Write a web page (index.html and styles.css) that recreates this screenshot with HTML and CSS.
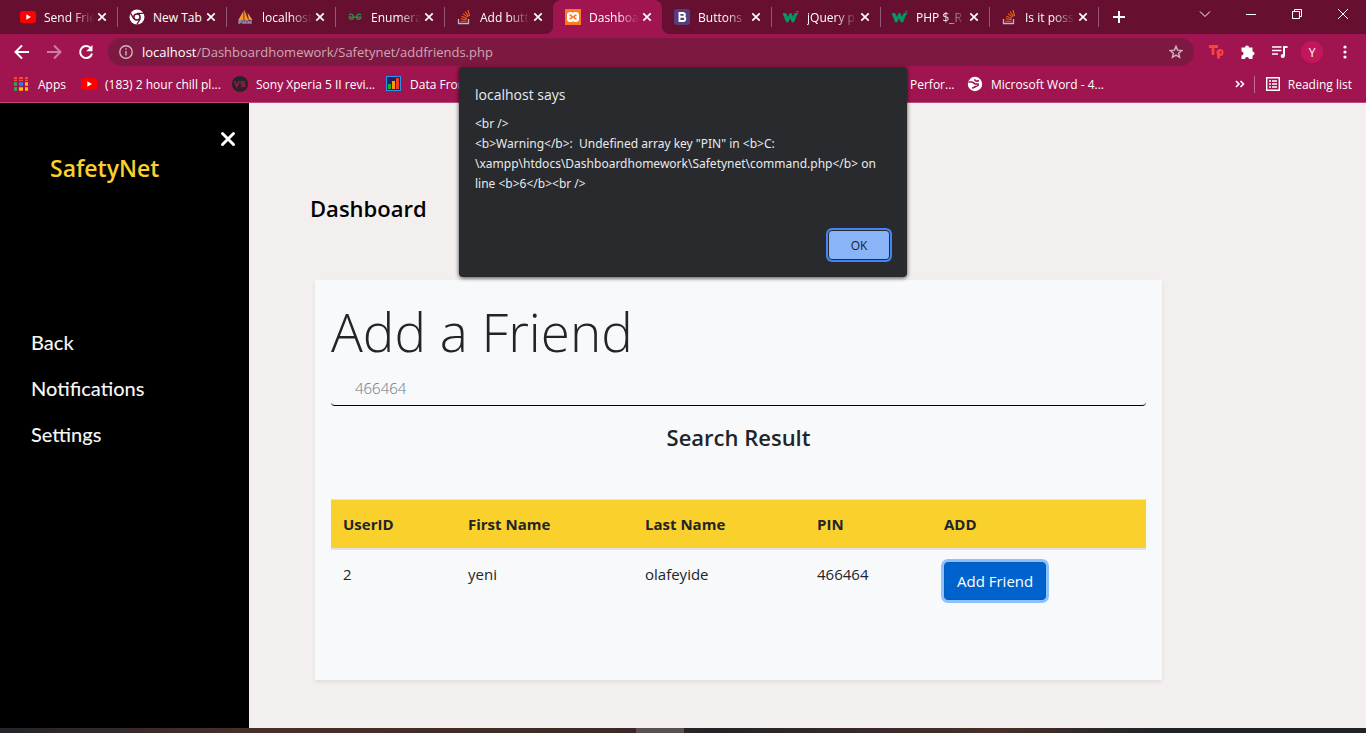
FILE: index.html
```
<!DOCTYPE html>
<html lang="en">
<head>
<meta charset="utf-8">
<title>Dashboard</title>
<link rel="stylesheet" href="styles.css">
</head>
<body>
<svg class="defs" aria-hidden="true">
  <symbol id="youtube" viewBox="0 0 16 16"><rect y="2" width="16" height="12" rx="3" fill="#f00"/><path d="M6.300 5.300v5.400L11 8z" fill="#fff"/></symbol>
  <symbol id="close" viewBox="0 0 10 10"><path d="M1.300 1.300l7.400 7.400M8.700 1.300L1.300 8.700" stroke="#fff" stroke-width="1.700"/></symbol>
  <symbol id="overflow" viewBox="0 0 16 16"><path d="M2.500 10v4.500h10V10" fill="none" stroke="#bbb" stroke-width="1.300"/><path d="M4.500 12.200h6M4.700 9.800l5.900.9M5.400 7.200l5.500 2.300M6.900 4.600l4.800 3.500M9 2.500l3.600 4.800M12 1l1.600 5.800" stroke="#f2650f" stroke-width="1.100"/></symbol>
  <symbol id="wschools" viewBox="0 0 16 16"><path d="M0 4.500h3L5 9l1.800-4.500h1.400L10 9l1.800-4.500H14L10.800 13H9.200L7 8.500 5 13H3.500z" fill="#059862" stroke="#059862" stroke-width=".8"/><path d="M13 2.500h2.200L14 4c1.600.1 1.500 2-.8 1.700" fill="none" stroke="#059862" stroke-width=".8"/></symbol>
</svg>
<header class="browser">
  <div class="tabstrip">
    <div class="tab"><svg class="favicon"><use href="#youtube"/></svg><span class="tab-title">Send Frie</span><button class="tab-close" aria-label="Close tab"><svg><use href="#close"/></svg></button></div>
    <div class="tab"><svg class="favicon" viewBox="0 0 16 16"><circle cx="8" cy="8" r="7.500" fill="#fff"/><circle cx="8" cy="8" r="3.100" fill="#fff" stroke="#660f31" stroke-width="1.500"/><path d="M8 4.300h6.700M4.800 9.800L1.500 4.200M11.200 9.800L7.900 15.500" stroke="#660f31" stroke-width="1.300"/></svg><span class="tab-title whole">New Tab</span><button class="tab-close" aria-label="Close tab"><svg><use href="#close"/></svg></button></div>
    <div class="tab"><svg class="favicon" viewBox="0 0 16 16"><path d="M0 11.500L5.500 2v9.500zM6.300 11.500V.5l4.200 11zM10.800 11L9.500 3.500 14.500 11z" fill="#f69a2b"/><path d="M1 15v-3h2v1.500H1M5 15v-3l1.500 2L8 12v3M10 15v-3l1.500 2L13 12v3" fill="none" stroke="#8a8fb5" stroke-width="1.300"/></svg><span class="tab-title">localhost</span><button class="tab-close" aria-label="Close tab"><svg><use href="#close"/></svg></button></div>
    <div class="tab"><svg class="favicon" viewBox="0 0 16 16"><path d="M2 6c1.600-1.500 4.500-1 4.500 2S3 11 2 8.200h12c-1 2.800-4.500 2.800-4.500-.2s2.900-3.500 4.500-2" fill="none" stroke="#308d46" stroke-width="1.300"/></svg><span class="tab-title">Enumera</span><button class="tab-close" aria-label="Close tab"><svg><use href="#close"/></svg></button></div>
    <div class="tab"><svg class="favicon"><use href="#overflow"/></svg><span class="tab-title">Add butt</span><button class="tab-close" aria-label="Close tab"><svg><use href="#close"/></svg></button></div>
    <div class="tab active"><svg class="favicon" viewBox="0 0 16 16"><rect width="16" height="16" fill="#fb7a24"/><rect x="2" y="3" width="12" height="10" rx="3" fill="#fff"/><path d="M4.500 5.500h1.800L8 7.500l1.700-2h1.800v1.800H10v1.400h1.500v1.800H9.700L8 8.500l-1.700 2H4.500V8.700H6V7.300H4.500z" fill="#fb7a24"/><path d="M7.200 3h1.600L8 4.500zM7.200 13h1.600L8 11.500z" fill="#fb7a24"/></svg><span class="tab-title">Dashboa</span><button class="tab-close" aria-label="Close tab"><svg><use href="#close"/></svg></button></div>
    <div class="tab"><svg class="favicon" viewBox="0 0 16 16"><rect width="16" height="16" rx="3" fill="#563d7c"/><path d="M5.500 4h3.200c2.800 0 2.800 3.800 0 3.800H5.500h3.600c2.900 0 2.900 4.200 0 4.200H5.500z" fill="none" stroke="#fff" stroke-width="1.900"/></svg><span class="tab-title">Buttons</span><button class="tab-close" aria-label="Close tab"><svg><use href="#close"/></svg></button></div>
    <div class="tab"><svg class="favicon"><use href="#wschools"/></svg><span class="tab-title">jQuery p</span><button class="tab-close" aria-label="Close tab"><svg><use href="#close"/></svg></button></div>
    <div class="tab"><svg class="favicon"><use href="#wschools"/></svg><span class="tab-title">PHP $_R</span><button class="tab-close" aria-label="Close tab"><svg><use href="#close"/></svg></button></div>
    <div class="tab"><svg class="favicon"><use href="#overflow"/></svg><span class="tab-title">Is it poss</span><button class="tab-close" aria-label="Close tab"><svg><use href="#close"/></svg></button></div>
    <button class="new-tab" aria-label="New tab"><svg width="14" height="14" viewBox="0 0 14 14"><path d="M7 1v12M1 7h12" stroke="#fff" stroke-width="2"/></svg></button>
    <div class="window-controls">
      <button aria-label="Search tabs"><svg width="12" height="12" viewBox="0 0 12 12"><path d="M1 3.500l5 5 5-5"/></svg></button>
      <button aria-label="Minimize"><svg width="12" height="12" viewBox="0 0 12 12"><path d="M1 6.500h10"/></svg></button>
      <button aria-label="Restore"><svg width="12" height="12" viewBox="0 0 12 12"><path d="M1.500 3.500h7v7h-7zM3.500 3.500v-2h7v7h-2"/></svg></button>
      <button aria-label="Close"><svg width="12" height="12" viewBox="0 0 12 12"><path d="M1 1l10 10M11 1L1 11"/></svg></button>
    </div>
  </div>
  <div class="toolbar">
    <button aria-label="Back"><svg width="16" height="16" viewBox="0 0 16 16"><path d="M15 8H2M8 1.500L1.500 8 8 14.500"/></svg></button>
    <button class="faded" aria-label="Forward"><svg width="16" height="16" viewBox="0 0 16 16"><path d="M1 8h13M8 1.500L14.500 8 8 14.500"/></svg></button>
    <button aria-label="Reload"><svg width="16" height="16" viewBox="0 0 16 16"><path d="M13 4.500A6 6 0 1 0 14 9.500"/><path d="M14.500 1v6.300H8.200z" fill="#fff" stroke="none"/></svg></button>
    <div class="omnibox">
      <svg width="14" height="14" viewBox="0 0 14 14" class="info"><circle cx="7" cy="7" r="6.200"/><path d="M7 6v4.500M7 3.300v1.500"/></svg>
      <span class="url"><b>localhost</b>/Dashboardhomework/Safetynet/addfriends.php</span>
      <button aria-label="Bookmark this tab"><svg width="14" height="14" viewBox="0 0 14 14" class="star"><path d="M7 1.300l1.600 3.900 4.200.3-3.200 2.700 1 4.100L7 10.100l-3.600 2.200 1-4.100L1.200 5.500l4.200-.3z"/></svg></button>
    </div>
    <div class="actions">
      <button class="tp" aria-label="Extension"><svg width="16" height="16" viewBox="0 0 16 16"><path d="M1 2.500h9M5 2v9M10.500 14.500V7" stroke="#ff4138" stroke-width="2.800"/><circle cx="12" cy="8.500" r="2.500" stroke="#ff4138" stroke-width="2"/></svg></button>
      <button aria-label="Extensions"><svg width="16" height="16" viewBox="0 0 16 16"><path d="M1.500 3.500H5a2 2 0 1 1 4 0h3.500v4a2 2 0 1 1 0 4V15H9a2 2 0 1 0-4 0H1.500v-3.500a2 2 0 1 0 0-4z" fill="#fff" stroke="none"/></svg></button>
      <button aria-label="Media"><svg width="16" height="16" viewBox="0 0 16 16"><path d="M0 3h9.500M0 6.500h9.500M0 10h6" stroke-width="1.700"/><path d="M12 12V3h3.500" stroke-width="2"/><circle cx="10.800" cy="12" r="2.100" fill="#fff" stroke="none"/></svg></button>
      <button class="avatar">Y</button>
      <button aria-label="Menu"><svg width="16" height="16" viewBox="0 0 16 16"><g fill="#fff" stroke="none"><circle cx="8" cy="3" r="1.600"/><circle cx="8" cy="8" r="1.600"/><circle cx="8" cy="13" r="1.600"/></g></svg></button>
    </div>
  </div>
  <nav class="bookmarks">
    <a href="#" class="bm-apps"><svg viewBox="0 0 14 14" class="apps-icon"><path d="M0 2h3M5 2h4M11 2h3" stroke="#ff4539" stroke-width="4"/><path d="M0 7h3" stroke="#2da94f" stroke-width="3.500"/><path d="M5 7h4" stroke="#2f7df6" stroke-width="3.500"/><path d="M11 7h3M5 12h4M11 12h3" stroke="#fdbd00" stroke-width="3.500"/><path d="M0 12h3" stroke="#2da94f" stroke-width="3.500"/><path d="M0 2.500h14" stroke="#a01550" stroke-width=".8"/></svg>Apps</a>
    <a href="#" class="bm-chill"><svg class="favicon"><use href="#youtube"/></svg>(183) 2 hour chill pl...</a>
    <a href="#" class="bm-sony"><svg class="favicon" viewBox="0 0 16 16"><circle cx="8" cy="8" r="8" fill="#252525"/><path d="M2.500 5l2.300 5.500L7.200 5M13 5.800H9.500V8H12.500v2.300H8.800" fill="none" stroke="#a01550" stroke-width="1.600"/></svg>Sony Xperia 5 II revi...</a>
    <a href="#" class="bm-data"><svg class="favicon" viewBox="0 0 16 16"><rect x=".5" y=".5" width="14" height="14" fill="#25215c" stroke="#2196f3"/><path d="M3.500 13V8" stroke="#2fa82f" stroke-width="3"/><path d="M7.500 13V5" stroke="#ff9800" stroke-width="3"/><path d="M11.500 13V2" stroke="#f83a26" stroke-width="3"/></svg>Data From</a>
    <a href="#" class="bm-perf">Perfor...</a>
    <a href="#"><svg class="favicon" viewBox="0 0 16 16"><circle cx="8" cy="8" r="7.200" fill="#fff"/><path d="M1.500 6h3.500c1.500 0 1.500 2 3.500 2h2.500v2M8 3.300c-.5 2 2.500 2.200 4 1.200M5 12c2.500 0 3-2 5.500-2" fill="none" stroke="#a01550" stroke-width="1.700"/></svg>Microsoft Word - 4...</a>
    <div class="bookmarks-end">
      <button aria-label="More bookmarks"><svg width="10" height="8" viewBox="0 0 10 8"><path d="M1 1l3 3-3 3M5.500 1l3 3-3 3" fill="none" stroke="#fff" stroke-width="1.600"/></svg></button>
      <a href="#"><svg width="14" height="14" viewBox="0 0 14 14"><path d="M.7.700h12.600v12.600H.7z" fill="none" stroke="#fff" stroke-width="1.400"/><path d="M3 4h2M6 4h5M3 7h2M6 7h5M3 10h2M6 10h5" stroke="#fff" stroke-width="1.500"/></svg>Reading list</a>
    </div>
  </nav>
</header>
<div class="page">
  <aside class="sidebar">
    <button class="sidebar-close" aria-label="Close menu"><svg width="16" height="16" viewBox="0 0 16 16"><path d="M2.500 2.500l11 11M13.500 2.500l-11 11" stroke="#fff" stroke-width="3" stroke-linecap="round"/></svg></button>
    <h3 class="brand">SafetyNet</h3>
    <nav class="side-links"><a href="#">Back</a><a href="#">Notifications</a><a href="#">Settings</a></nav>
  </aside>
  <main class="main">
    <h3 class="page-title">Dashboard</h3>
    <section class="card">
      <h1 class="display">Add a Friend</h1>
      <input class="search" type="text" value="466464" aria-label="Friend PIN">
      <h4 class="result-title">Search Result</h4>
      <table class="results">
        <colgroup><col class="c-id"><col class="c-first"><col class="c-last"><col class="c-pin"><col></colgroup>
        <thead><tr><th>UserID</th><th>First Name</th><th>Last Name</th><th>PIN</th><th>ADD</th></tr></thead>
        <tbody><tr><td>2</td><td>yeni</td><td>olafeyide</td><td>466464</td><td><button class="add">Add Friend</button></td></tr></tbody>
      </table>
    </section>
  </main>
</div>
<footer class="taskbar"><span></span></footer>
<div class="dialog" role="alertdialog" aria-labelledby="dialog-title">
  <h2 id="dialog-title">localhost says</h2>
  <p>&lt;br /&gt;<br>&lt;b&gt;Warning&lt;/b&gt;:&nbsp; Undefined array key "PIN" in &lt;b&gt;C:<br>\xampp\htdocs\Dashboardhomework\Safetynet\command.php&lt;/b&gt; on<br>line &lt;b&gt;6&lt;/b&gt;&lt;br /&gt;</p>
  <button class="ok">OK</button>
</div>
</body>
</html>
```
FILE: styles.css
```
* { box-sizing: border-box; }
body { margin: 0; min-height: 100vh; display: flex; flex-direction: column; font-family: "Open Sans", "Noto Sans", sans-serif; overflow: hidden; }
button { border: 0; padding: 0; background: none; font-family: inherit; color: inherit; display: flex; align-items: center; justify-content: center; }
a { color: inherit; text-decoration: none; }
h1, h2, h3, h4, p { margin: 0; }
svg { flex: none; display: block; }
.defs { position: absolute; width: 0; height: 0; }
.favicon { width: 16px; height: 16px; }

.browser { background: #a01550; color: #fff; font-size: 12px; border-bottom: 1px solid #bd4a7b; }
.tabstrip { display: flex; height: 34px; padding-left: 8px; background: #660f31; }
.tab { flex: 0 0 109px; display: flex; align-items: center; padding-left: 12px; position: relative; }
.tab:not(.active)::after { content: ""; position: absolute; right: -1px; top: 7px; height: 20px; width: 1px; background: #95587a; }
.tab:nth-child(5)::after { visibility: hidden; }
.tab-title { flex: 1; margin-left: 8px; white-space: nowrap; -webkit-mask-image: linear-gradient(90deg, #000 28px, transparent 50px); mask-image: linear-gradient(90deg, #000 28px, transparent 50px); }
.tab-title.whole { -webkit-mask-image: none; mask-image: none; }
.tab-close { flex: none; width: 20px; height: 20px; margin: 0 5px 0 -4px; }
.tab-close svg { width: 10px; height: 10px; }
.tab.active { background: #a01550; border-radius: 8px 8px 0 0; }
.tab.active::before { content: ""; position: absolute; inset: auto -8px 0; height: 8px; background: radial-gradient(circle at 0 0, transparent 8px, #a01550 8px) left / 8px 8px no-repeat, radial-gradient(circle at 100% 0, transparent 8px, #a01550 8px) right / 8px 8px no-repeat; }
.new-tab { width: 28px; margin-left: 7px; }
.window-controls { display: flex; margin-left: auto; }
.window-controls button { width: 46px; height: 28px; }
.window-controls path { fill: none; stroke: #fff; stroke-width: 1; }

.toolbar { display: flex; align-items: center; height: 36px; padding: 0 16px 0 14px; }
.toolbar > button { width: 16px; margin-right: 16px; }
.toolbar svg { fill: none; stroke: #fff; stroke-width: 2; }
.toolbar .faded { opacity: .45; }
.omnibox { flex: 1; display: flex; align-items: center; height: 28px; margin-left: -2px; padding: 0 11px; border-radius: 14px; background: #7d1941; }
.omnibox .info, .omnibox .star { stroke: #d4b4c2; stroke-width: 1.400; }
.url { flex: 1; margin-left: 9px; font-size: 13px; color: #cfa6b6; }
.url b { font-weight: 400; color: #fff; }
.actions { display: flex; align-items: center; gap: 16px; margin-left: 14px; }
.avatar { width: 22px; height: 22px; margin: 0 -3px; border-radius: 50%; background: #c2185b; font-size: 12px; }
.actions button:last-child { width: 10px; margin-left: 4px; }

.bookmarks { display: flex; align-items: center; height: 32px; padding: 0 14px 4px; white-space: nowrap; }
.bookmarks a { display: flex; align-items: center; gap: 8px; }
.bookmarks .apps-icon { width: 14px; height: 14px; margin-right: 2px; }
.bookmarks .bm-apps { width: 67px; }
.bookmarks .bm-chill { width: 151px; }
.bookmarks .bm-sony { width: 154px; }
.bookmarks .bm-data { width: 524px; }
.bookmarks .bm-perf { width: 57px; }
.bookmarks-end { display: flex; align-items: center; gap: 12px; margin-left: auto; }
.bookmarks-end a { padding-left: 11px; border-left: 1px solid #c56a91; }
.bookmarks-end > button { margin-right: -3px; }

.page { flex: 1; display: flex; background: #f3efee; }
.sidebar { flex: 0 0 249px; padding: 28px 13px; background: #000; display: flex; flex-direction: column; }
.sidebar-close { align-self: flex-end; width: 16px; height: 16px; }
.brand { margin: 5px 0 0 37px; font-size: 23px; line-height: 32px; font-weight: 600; color: #f9d02d; }
.side-links { display: flex; flex-direction: column; margin: 135px 0 0 18px; font: 500 20px/46px Lato, sans-serif; color: #f5f5f5; }
.main { flex: 1; padding: 89px 204px 48px 61px; color: #212529; }
.page-title { font-size: 22px; line-height: 32px; font-weight: 600; color: #000; }
.card { min-height: 400px; margin: 56px 0 0 5px; padding: 16px; background: #f8f9fb; box-shadow: 0 2px 4px rgba(0, 0, 0, .08); }
.display { font-size: 53px; line-height: 72px; font-weight: 300; margin-bottom: 4px; }
.search { display: block; width: 100%; height: 34px; padding: 0 24px 2px; border: 0; border-bottom: 1px solid #000; border-radius: 4px; background: none; font: 300 15px "Open Sans", sans-serif; color: #6c757d; }
.result-title { margin: 15px 0 46px; text-align: center; font-size: 22px; line-height: 32px; font-weight: 600; }
.results { width: 100%; border-collapse: collapse; table-layout: fixed; font-size: 15px; line-height: 24px; }
.c-id { width: 125px; }
.c-first { width: 177px; }
.c-last { width: 172px; }
.c-pin { width: 127px; }
.results th, .results td { padding: 12px; text-align: left; vertical-align: top; }
.results th { background: #fad02c; border-top: 1px solid #dee2e6; border-bottom: 2px solid #dee2e6; font-weight: 700; }
.results td { font-weight: 400; }
.add { height: 38px; padding: 0 12px; border: 1px solid #005cbf; border-radius: 4px; background: #0062cc; color: #fff; font-size: 15px; box-shadow: 0 0 0 3px #8dc1fc; }

.taskbar { display: flex; justify-content: center; height: 5px; background: linear-gradient(90deg, #25242a, #46302a 18%, #3d2a26 45%, #252326 52%, #46302a 73%, #202326 85%); }
.taskbar span { width: 48px; margin-right: 46px; background: #5a5251; }

.dialog { position: absolute; top: 67px; left: 50%; transform: translateX(-50%); width: 448px; height: 210px; padding: 16px; display: flex; flex-direction: column; border-radius: 4px; background: #292a2d; color: #e8eaed; box-shadow: 0 1px 4px rgba(0, 0, 0, .7); }
.dialog h2 { font-size: 14px; line-height: 24px; font-weight: 400; }
.dialog p { margin-top: 7px; font: 12px/20px "Noto Sans", sans-serif; white-space: nowrap; }
.ok { align-self: flex-end; width: 62px; height: 30px; margin: auto 1px 1px 0; border: 1px solid #292a2d; border-radius: 4px; background: #8ab4f8; color: #202124; font-size: 12px; box-shadow: 0 0 0 2px #4285f4; }
```
